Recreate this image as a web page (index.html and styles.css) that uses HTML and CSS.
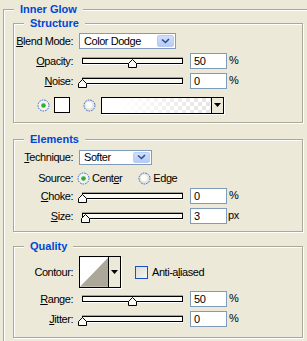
FILE: index.html
```html
<!DOCTYPE html>
<html lang="en">
<head>
    <meta charset="UTF-8"/>
    <title>Inner Glow</title>
    <link rel="stylesheet" href="styles.css">
</head>
<body>
<div class="group outer">
    <div class="group-title">Inner Glow</div>

    <!-- Structure -->
    <div class="group inner structure">
        <div class="group-title">Structure</div>

        <div class="row">
            <span class="lbl"><u>B</u>lend Mode:</span>
            <div class="select select-blend">
                <span class="select-text">Color Dodge</span>
                <span class="select-btn"><svg width="9" height="6" viewBox="0 0 9 6"><path d="M1 1.5L4.5 4.5L8 1" fill="none" stroke="#2d4f86" stroke-width="1.6"/></svg></span>
            </div>
        </div>

        <div class="row">
            <span class="lbl"><u>O</u>pacity:</span>
            <div class="slider"><div class="track"><span class="thumb" style="left: 50%"><svg width="9" height="9" viewBox="0 0 9 9"><path d="M0.5 8.5V4.5L4.5 0.5L8.5 4.5V8.5Z" fill="#fbfbf5" stroke="#000"/></svg></span></div></div>
            <div class="field">50</div>
            <span class="unit">%</span>
        </div>

        <div class="row">
            <span class="lbl"><u>N</u>oise:</span>
            <div class="slider"><div class="track"><span class="thumb" style="left: 0%"><svg width="9" height="9" viewBox="0 0 9 9"><path d="M0.5 8.5V4.5L4.5 0.5L8.5 4.5V8.5Z" fill="#fbfbf5" stroke="#000"/></svg></span></div></div>
            <div class="field">0</div>
            <span class="unit">%</span>
        </div>

        <div class="row row-color">
            <svg class="radio" width="13" height="13" viewBox="0 0 13 13"><circle cx="6.5" cy="6.5" r="5.5" fill="#f4f4ef" stroke="#2f5fd6" stroke-dasharray="1.6 1"/><circle cx="6.5" cy="6.5" r="2.3" fill="#2fae2f"/></svg>
            <span class="swatch"></span>
            <svg class="radio radio-2" width="13" height="13" viewBox="0 0 13 13"><circle cx="6.5" cy="6.5" r="5.5" fill="#e6e6df" stroke="#2f5fd6" stroke-dasharray="1.6 1"/><circle cx="6" cy="6" r="3.2" fill="#fbfbf8"/></svg>
            <div class="gradient-pick">
                <span class="gradient"></span>
                <span class="drop"><svg width="7" height="4" viewBox="0 0 7 4"><path d="M0 0H7L3.5 4Z" fill="#000"/></svg></span>
            </div>
        </div>
    </div>

    <!-- Elements -->
    <div class="group inner elements">
        <div class="group-title">Elements</div>

        <div class="row">
            <span class="lbl"><u>T</u>echnique:</span>
            <div class="select select-tech">
                <span class="select-text">Softer</span>
                <span class="select-btn"><svg width="9" height="6" viewBox="0 0 9 6"><path d="M1 1.5L4.5 4.5L8 1" fill="none" stroke="#2d4f86" stroke-width="1.6"/></svg></span>
            </div>
        </div>

        <div class="row row-source">
            <span class="lbl">Source:</span>
            <svg class="radio" width="13" height="13" viewBox="0 0 13 13"><circle cx="6.5" cy="6.5" r="5.5" fill="#f4f4ef" stroke="#2f5fd6" stroke-dasharray="1.6 1"/><circle cx="6.5" cy="6.5" r="2.3" fill="#2fae2f"/></svg>
            <span class="opt">Cent<u>e</u>r</span>
            <svg class="radio radio-edge" width="13" height="13" viewBox="0 0 13 13"><circle cx="6.5" cy="6.5" r="5.5" fill="#e6e6df" stroke="#2f5fd6" stroke-dasharray="1.6 1"/><circle cx="6" cy="6" r="3.2" fill="#fbfbf8"/></svg>
            <span class="opt">Ed<u>g</u>e</span>
        </div>

        <div class="row">
            <span class="lbl"><u>C</u>hoke:</span>
            <div class="slider"><div class="track"><span class="thumb" style="left: 0%"><svg width="9" height="9" viewBox="0 0 9 9"><path d="M0.5 8.5V4.5L4.5 0.5L8.5 4.5V8.5Z" fill="#fbfbf5" stroke="#000"/></svg></span></div></div>
            <div class="field">0</div>
            <span class="unit">%</span>
        </div>

        <div class="row">
            <span class="lbl"><u>S</u>ize:</span>
            <div class="slider"><div class="track"><span class="thumb" style="left: 3%"><svg width="9" height="9" viewBox="0 0 9 9"><path d="M0.5 8.5V4.5L4.5 0.5L8.5 4.5V8.5Z" fill="#fbfbf5" stroke="#000"/></svg></span></div></div>
            <div class="field">3</div>
            <span class="unit unit-px">px</span>
        </div>
    </div>

    <!-- Quality -->
    <div class="group inner quality">
        <div class="group-title">Quality</div>

        <div class="row row-contour">
            <span class="lbl">Contour:</span>
            <div class="contour">
                <svg class="contour-img" width="29" height="30" viewBox="0 0 29 30"><rect width="29" height="30" fill="#fff"/><path d="M0 30L29 0V30Z" fill="#aca899"/></svg>
                <span class="drop"><svg width="7" height="4" viewBox="0 0 7 4"><path d="M0 0H7L3.5 4Z" fill="#000"/></svg></span>
            </div>
            <span class="check"></span>
            <span class="opt">Anti-a<u>l</u>iased</span>
        </div>

        <div class="row row-range">
            <span class="lbl"><u>R</u>ange:</span>
            <div class="slider"><div class="track"><span class="thumb" style="left: 50%"><svg width="9" height="9" viewBox="0 0 9 9"><path d="M0.5 8.5V4.5L4.5 0.5L8.5 4.5V8.5Z" fill="#fbfbf5" stroke="#000"/></svg></span></div></div>
            <div class="field">50</div>
            <span class="unit">%</span>
        </div>

        <div class="row">
            <span class="lbl"><u>J</u>itter:</span>
            <div class="slider"><div class="track"><span class="thumb" style="left: 0%"><svg width="9" height="9" viewBox="0 0 9 9"><path d="M0.5 8.5V4.5L4.5 0.5L8.5 4.5V8.5Z" fill="#fbfbf5" stroke="#000"/></svg></span></div></div>
            <div class="field">0</div>
            <span class="unit">%</span>
        </div>
    </div>
</div>
</body>
</html>
```

FILE: styles.css
```css
/* reset */
* {
    margin: 0;
    padding: 0;
    box-sizing: border-box;
}

html, body {
    overflow: hidden;
}

body {
    background-color: #ece9d8;
    font-family: "Liberation Sans", Arial, sans-serif;
    font-size: 11px;
    letter-spacing: -0.45px;
    color: #000;
    padding: 9px 0 0 3px;
}

u {
    text-decoration: underline;
    text-underline-offset: 1px;
}

/* etched group boxes */
.group {
    position: relative;
    border: 1px solid #aca899;
    box-shadow: inset 1px 1px 0 #fff, 1px 1px 0 #fff;
}

.group-title {
    position: absolute;
    top: -7px;
    left: 10px;
    padding: 0 6px;
    line-height: 13px;
    background-color: #ece9d8;
    color: #0046d5;
    font-weight: bold;
    letter-spacing: 0;
}

.outer {
    width: 320px;
    padding: 13px 0 20px 9px;
}

.inner {
    width: 290px;
}

.structure {
    padding: 7px 0;
}

.elements {
    margin-top: 16px;
    padding: 7px 0 5px;
}

.quality {
    margin-top: 14px;
    padding: 9px 0 8px;
}

/* rows */
.row {
    display: flex;
    align-items: center;
    height: 20px;
}

.lbl {
    width: 59px;
    margin-right: 6px;
    text-align: right;
    white-space: nowrap;
}

/* dropdowns */
.select {
    display: flex;
    align-items: center;
    justify-content: space-between;
    height: 16px;
    padding: 1px 1px 1px 4px;
    background-color: #fff;
    border: 1px solid #7f9db9;
}

.select-blend {
    width: 97px;
}

.select-tech {
    width: 73px;
    height: 15px;
}

.select-btn {
    display: flex;
    align-items: center;
    justify-content: center;
    width: 17px;
    height: 100%;
    background: linear-gradient(#d2defc, #b7cbf7);
    border: 1px solid #b9cdf5;
    border-radius: 2px;
}

/* sliders */
.slider {
    width: 108px;
    padding: 0 4px 0 3px;
    margin-right: 3px;
}

.track {
    position: relative;
    height: 6px;
    background-color: #fbfbf3;
    border: 1px solid #000;
    box-shadow: 0 -1px 0 #a5a396, 0 1px 0 #fff;
}

.thumb {
    position: absolute;
    top: 0;
    margin-left: -5px;
    line-height: 0;
}

.field {
    width: 37px;
    height: 16px;
    padding: 1px 3px;
    line-height: 12px;
    background-color: #fff;
    border: 1px solid #7f9db9;
}

.unit {
    margin-left: 2px;
    align-self: flex-start;
    margin-top: 3px;
}

.unit-px {
    margin-left: 1px;
}

/* colour row */
.row-color {
    margin-top: 4px;
    padding-left: 23px;
}

.radio {
    flex: none;
}

.swatch {
    width: 16px;
    height: 16px;
    margin-left: 4px;
    background-color: #fff;
    border: 1px solid #000;
}

.radio-2 {
    margin-left: 13px;
}

.gradient-pick {
    display: flex;
    height: 17px;
    margin-left: 5px;
    border: 1px solid #000;
    box-shadow: 1px 1px 0 #fff;
}

.gradient {
    width: 109px;
    background:
        linear-gradient(to right, #fff 15%, rgba(255, 255, 255, 0.35)),
        repeating-conic-gradient(#d6d6d6 0 25%, #fff 0 50%) 0 0 / 8px 8px;
}

.drop {
    display: flex;
    align-items: center;
    justify-content: center;
    width: 12px;
    border-left: 1px solid #000;
    background-color: #ece9d8;
}

/* source radios */
.row-source {
    height: 16px;
    margin-top: 3px;
}

.row-source .lbl {
    margin-right: 4px;
}

.opt {
    margin-left: 2px;
    white-space: nowrap;
}

.radio-edge {
    margin-left: 16px;
}

/* contour */
.row-contour {
    height: 32px;
}

.contour {
    display: flex;
    width: 42px;
    height: 32px;
    border: 1px solid #000;
    box-shadow: 1px 1px 0 #fff;
}

.contour-img {
    display: block;
}

.contour .drop {
    width: 12px;
}

.check {
    width: 13px;
    height: 13px;
    margin-left: 14px;
    border: 1px solid #1c51c0;
    background: linear-gradient(135deg, #dcdcd4, #f6f6f2);
}

.row-contour .opt {
    margin-left: 4px;
}

.row-range {
    margin-top: 1px;
}
```
